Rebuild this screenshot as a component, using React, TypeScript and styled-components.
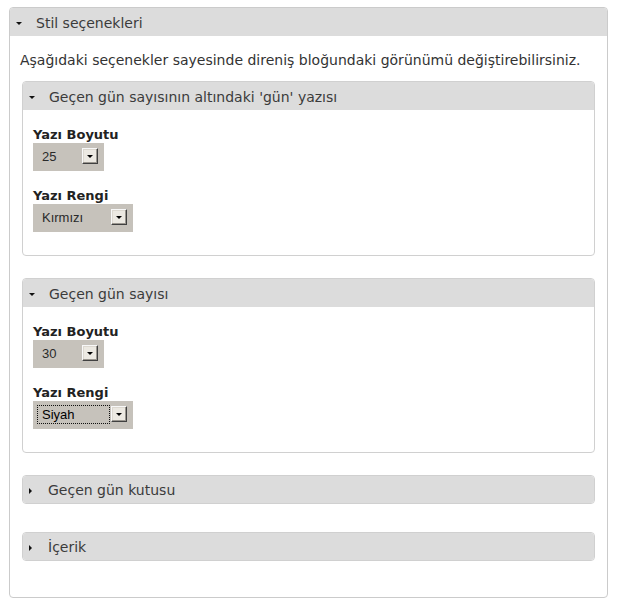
import React from "react";
import styled, { createGlobalStyle, css } from "styled-components";

const Global = createGlobalStyle`
  html, body { margin: 0; padding: 0; background: #fff; }
  body { font-family: "DejaVu Sans", Verdana, sans-serif; font-size: 14px; color: #333; }
`;

const Page = styled.div`
  padding: 7px 10px 12px 9px;
`;

const Fieldset = styled.section<{ $outer?: boolean; $collapsed?: boolean; $gap?: number }>`
  border: 1px solid #cbcbcb;
  border-radius: 4px;
  background: #fff;
  overflow: hidden;
  ${(p) =>
    !p.$outer &&
    css`
      margin: 0 0 ${p.$gap ?? 22}px 2px;
      border-color: #d0d0d0;
    `}
  ${(p) =>
    p.$collapsed &&
    css`
      background: #dcdcdc;
    `}
`;

const Legend = styled.div<{ $collapsed?: boolean }>`
  display: flex;
  align-items: center;
  height: ${(p) => (p.$collapsed ? 27 : 28)}px;
  background: #dcdcdc;
  color: #3b3b3b;
  padding-left: 6px;
  padding-top: 2px;
  box-sizing: border-box;
  line-height: 17px;
`;

const Caret = styled.span<{ $open: boolean }>`
  display: inline-block;
  width: 0;
  height: 0;
  ${(p) =>
    p.$open
      ? css`
          margin-right: 14px;
          border-left: 3px solid transparent;
          border-right: 3px solid transparent;
          border-top: 3px solid #111;
          margin-top: 1px;
        `
      : css`
          margin-right: 16px;
          border-top: 3px solid transparent;
          border-bottom: 3px solid transparent;
          border-left: 3px solid #111;
        `}
`;

const OuterBody = styled.div`
  padding: 15px 12px 7px 10px;
`;

const Description = styled.p`
  margin: 0 0 12px;
  line-height: 18px;
  color: #333;
`;

const InnerBody = styled.div`
  padding: 17px 11px 23px 10px;
`;

const Field = styled.div`
  & + & {
    margin-top: 17px;
  }
`;

const Label = styled.label`
  display: block;
  font-weight: bold;
  font-size: 13px;
  color: #222;
  line-height: 16px;
`;

const Select = styled.div<{ $width: number }>`
  display: flex;
  align-items: center;
  box-sizing: border-box;
  width: ${(p) => p.$width}px;
  height: 28px;
  padding: 0 6px 2px 4px;
  background: #c6c2bb;
  font-family: "Liberation Sans", Arial, sans-serif;
  font-size: 13px;
`;

const Value = styled.span<{ $focused?: boolean }>`
  flex: 1;
  height: 19px;
  line-height: 17px;
  padding-left: 4px;
  box-sizing: border-box;
  border: 1px dotted ${(p) => (p.$focused ? "#111" : "transparent")};
  color: ${(p) => (p.$focused ? "#000" : "#2a2a2a")};
  margin-right: 1px;
`;

const ArrowButton = styled.span`
  display: flex;
  align-items: center;
  justify-content: center;
  box-sizing: border-box;
  width: 16px;
  height: 16px;
  background: #ece9e2;
  border: 1px solid;
  border-color: #f8f8f8 #404040 #404040 #f8f8f8;
  box-shadow: inset -1px -1px 0 #9a968f, inset 1px 1px 0 #dcd8d0;
  &::after {
    content: "";
    width: 0;
    height: 0;
    border-left: 3px solid transparent;
    border-right: 3px solid transparent;
    border-top: 3px solid #000;
  }
`;

type Opt = { value: string; width: number; focused?: boolean };

const FakeSelect = ({ value, width, focused }: Opt) => (
  <Select $width={width}>
    <Value $focused={focused}>{value}</Value>
    <ArrowButton />
  </Select>
);

const StyleGroup = ({ title, size, color, focused }: { title: string; size: string; color: string; focused?: boolean }) => (
  <Fieldset>
    <Legend>
      <Caret $open />
      {title}
    </Legend>
    <InnerBody>
      <Field>
        <Label>Yazı Boyutu</Label>
        <FakeSelect value={size} width={71} />
      </Field>
      <Field>
        <Label>Yazı Rengi</Label>
        <FakeSelect value={color} width={100} focused={focused} />
      </Field>
    </InnerBody>
  </Fieldset>
);

const Collapsed = ({ title, gap }: { title: string; gap?: number }) => (
  <Fieldset $collapsed $gap={gap}>
    <Legend $collapsed>
      <Caret $open={false} />
      {title}
    </Legend>
  </Fieldset>
);

export default function App() {
  return (
    <>
      <Global />
      <Page>
        <Fieldset $outer>
          <Legend>
            <Caret $open />
            Stil seçenekleri
          </Legend>
          <OuterBody>
            <Description>
              Aşağıdaki seçenekler sayesinde direniş bloğundaki görünümü değiştirebilirsiniz.
            </Description>
            <StyleGroup title="Geçen gün sayısının altındaki 'gün' yazısı" size="25" color="Kırmızı" />
            <StyleGroup title="Geçen gün sayısı" size="30" color="Siyah" focused />
            <Collapsed title="Geçen gün kutusu" gap={28} />
            <Collapsed title="İçerik" gap={29} />
          </OuterBody>
        </Fieldset>
      </Page>
    </>
  );
}
